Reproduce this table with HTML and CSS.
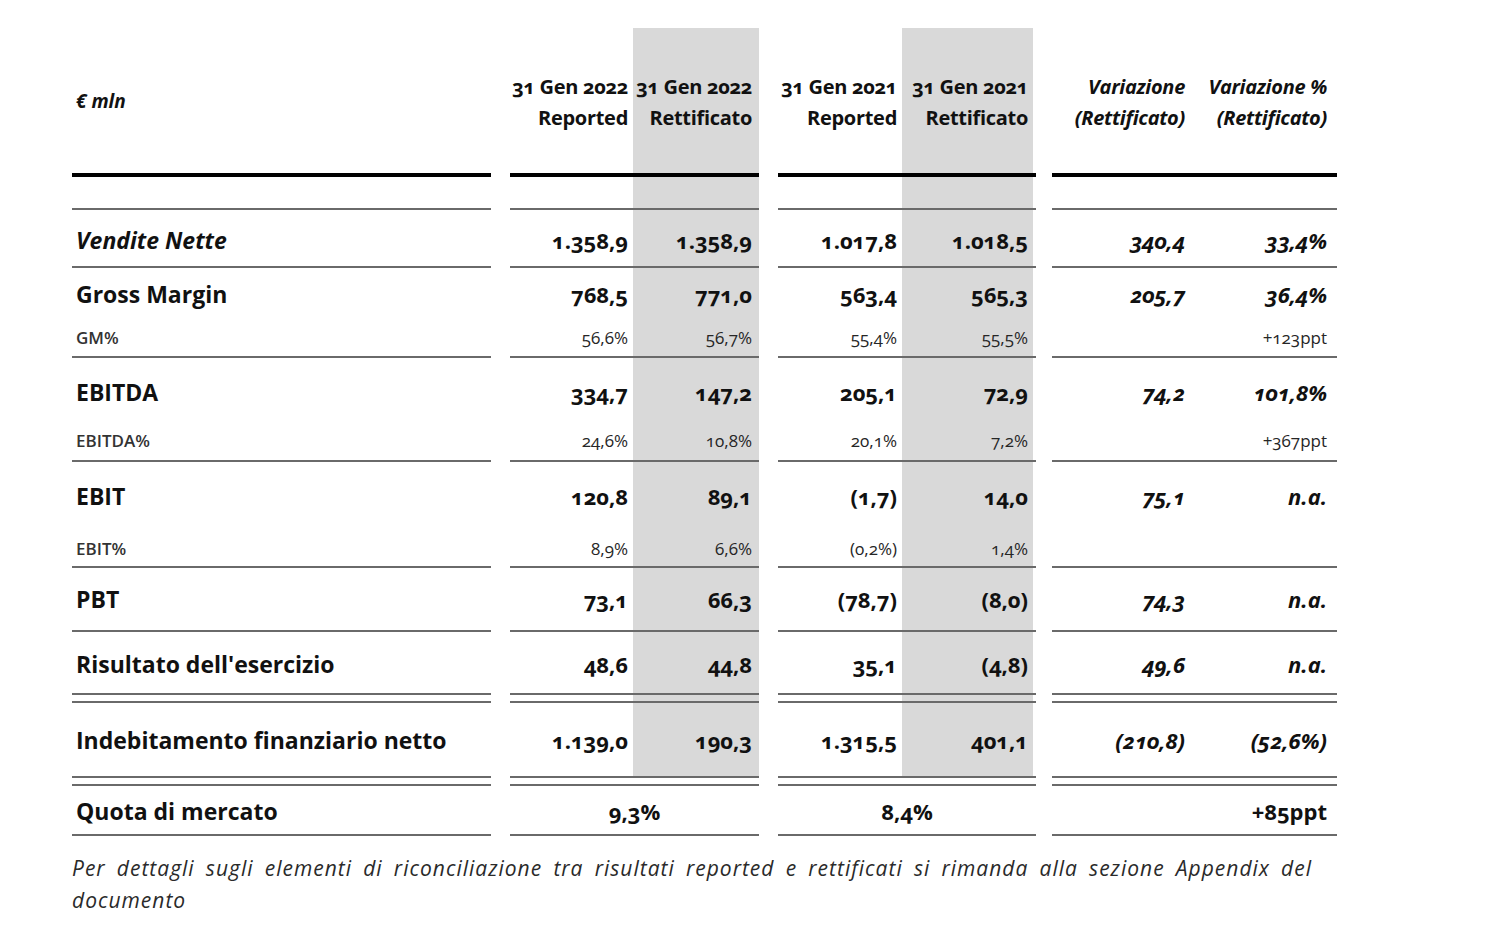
FILE: index.html
```html
<!DOCTYPE html>
<html lang="it">
<head>
<meta charset="utf-8">
<title>Risultati consolidati</title>
<link rel="stylesheet" href="styles.css">
</head>
<body>
<main class="report">
  <table class="fin">
    <colgroup>
      <col class="c-label"><col class="c-gap"><col class="c-rep1"><col class="c-ret1"><col class="c-gap"><col class="c-rep2"><col class="c-ret2"><col class="c-gap2"><col class="c-var"><col class="c-varp">
    </colgroup>
    <thead>
      <tr class="r-head">
        <th class="lbl unit">€ mln</th><th class="gap"></th>
        <th class="n1">31 Gen 2022<br>Reported</th>
        <th class="n2 shade">31 Gen 2022<br>Rettificato</th>
        <th class="gap"></th>
        <th class="n3">31 Gen 2021<br>Reported</th>
        <th class="n4 shade2">31 Gen 2021<br>Rettificato</th>
        <th class="gap"></th>
        <th class="n5 it">Variazione<br>(Rettificato)</th>
        <th class="n6 it">Variazione %<br>(Rettificato)</th>
      </tr>
    </thead>
    <tbody>
      <tr class="r-spacer line">
        <td></td><td class="gap"></td><td></td><td class="shade"></td><td class="gap"></td><td></td><td class="shade2"></td><td class="gap"></td><td></td><td></td>
      </tr>
      <tr class="r-vendite line">
        <td class="lbl it">Vendite Nette</td><td class="gap"></td>
        <td class="n1">1.358,9</td><td class="n2 shade">1.358,9</td><td class="gap"></td>
        <td class="n3">1.017,8</td><td class="n4 shade2">1.018,5</td><td class="gap"></td>
        <td class="n5 it">340,4</td><td class="n6 it">33,4%</td>
      </tr>
      <tr class="r-gm">
        <td class="lbl">Gross Margin</td><td class="gap"></td>
        <td class="n1">768,5</td><td class="n2 shade">771,0</td><td class="gap"></td>
        <td class="n3">563,4</td><td class="n4 shade2">565,3</td><td class="gap"></td>
        <td class="n5 it">205,7</td><td class="n6 it">36,4%</td>
      </tr>
      <tr class="r-gm-sub sub line">
        <td class="lbl">GM%</td><td class="gap"></td>
        <td class="n1">56,6%</td><td class="n2 shade">56,7%</td><td class="gap"></td>
        <td class="n3">55,4%</td><td class="n4 shade2">55,5%</td><td class="gap"></td>
        <td class="n5"></td><td class="n6">+123ppt</td>
      </tr>
      <tr class="r-ebitda">
        <td class="lbl">EBITDA</td><td class="gap"></td>
        <td class="n1">334,7</td><td class="n2 shade">147,2</td><td class="gap"></td>
        <td class="n3">205,1</td><td class="n4 shade2">72,9</td><td class="gap"></td>
        <td class="n5 it">74,2</td><td class="n6 it">101,8%</td>
      </tr>
      <tr class="r-ebitda-sub sub line">
        <td class="lbl">EBITDA%</td><td class="gap"></td>
        <td class="n1">24,6%</td><td class="n2 shade">10,8%</td><td class="gap"></td>
        <td class="n3">20,1%</td><td class="n4 shade2">7,2%</td><td class="gap"></td>
        <td class="n5"></td><td class="n6">+367ppt</td>
      </tr>
      <tr class="r-ebit">
        <td class="lbl">EBIT</td><td class="gap"></td>
        <td class="n1">120,8</td><td class="n2 shade">89,1</td><td class="gap"></td>
        <td class="n3">(1,7)</td><td class="n4 shade2">14,0</td><td class="gap"></td>
        <td class="n5 it">75,1</td><td class="n6 it">n.a.</td>
      </tr>
      <tr class="r-ebit-sub sub line">
        <td class="lbl">EBIT%</td><td class="gap"></td>
        <td class="n1">8,9%</td><td class="n2 shade">6,6%</td><td class="gap"></td>
        <td class="n3">(0,2%)</td><td class="n4 shade2">1,4%</td><td class="gap"></td>
        <td class="n5"></td><td class="n6"></td>
      </tr>
      <tr class="r-pbt line">
        <td class="lbl">PBT</td><td class="gap"></td>
        <td class="n1">73,1</td><td class="n2 shade">66,3</td><td class="gap"></td>
        <td class="n3">(78,7)</td><td class="n4 shade2">(8,0)</td><td class="gap"></td>
        <td class="n5 it">74,3</td><td class="n6 it">n.a.</td>
      </tr>
      <tr class="r-ris line">
        <td class="lbl">Risultato dell'esercizio</td><td class="gap"></td>
        <td class="n1">48,6</td><td class="n2 shade">44,8</td><td class="gap"></td>
        <td class="n3">35,1</td><td class="n4 shade2">(4,8)</td><td class="gap"></td>
        <td class="n5 it">49,6</td><td class="n6 it">n.a.</td>
      </tr>
      <tr class="r-rule line">
        <td></td><td class="gap"></td><td></td><td class="shade"></td><td class="gap"></td><td></td><td class="shade2"></td><td class="gap"></td><td></td><td></td>
      </tr>
      <tr class="r-debt line">
        <td class="lbl">Indebitamento finanziario netto</td><td class="gap"></td>
        <td class="n1">1.139,0</td><td class="n2 shade">190,3</td><td class="gap"></td>
        <td class="n3">1.315,5</td><td class="n4 shade2">401,1</td><td class="gap"></td>
        <td class="n5 it">(210,8)</td><td class="n6 it">(52,6%)</td>
      </tr>
      <tr class="r-rule line">
        <td></td><td class="gap"></td><td></td><td></td><td class="gap"></td><td></td><td></td><td class="gap"></td><td></td><td></td>
      </tr>
      <tr class="r-quota line">
        <td class="lbl">Quota di mercato</td><td class="gap"></td>
        <td class="mid" colspan="2">9,3%</td><td class="gap"></td>
        <td class="mid" colspan="2">8,4%</td><td class="gap"></td>
        <td class="n6" colspan="2">+85ppt</td>
      </tr>
    </tbody>
  </table>
  <p class="note">Per dettagli sugli elementi di riconciliazione tra risultati reported e rettificati si rimanda alla sezione Appendix del documento</p>
</main>
</body>
</html>
```

FILE: styles.css
```css
* { box-sizing: border-box; }

html, body {
  margin: 0;
  background: #ffffff;
}

body {
  font-family: "Open Sans", "Noto Sans", sans-serif;
  color: #111111;
  font-variant-numeric: oldstyle-nums;
}

.report {
  padding: 28px 0 0 72px;
}

.fin {
  border-collapse: separate;
  border-spacing: 0;
  table-layout: fixed;
  width: 1265px;
}

.c-label { width: 419px; }
.c-gap { width: 19px; }
.c-gap2 { width: 16px; }
.c-rep1 { width: 123px; }
.c-ret1 { width: 126px; }
.c-rep2 { width: 124px; }
.c-ret2 { width: 134px; }
.c-var { width: 138px; }
.c-varp { width: 147px; }

.fin th,
.fin td {
  padding: 0;
  vertical-align: middle;
  text-align: right;
  font-size: 22px;
  font-weight: 700;
  white-space: nowrap;
}

.fin .lbl {
  text-align: left;
  padding-left: 4px;
  font-size: 23px;
}

.fin .n1 { padding-right: 5px; }
.fin .n2 { padding-right: 7px; }
.fin .n3 { padding-right: 5px; }
.fin .n4 { padding-right: 8px; }
.fin .n5 { padding-right: 5px; }
.fin .n6 { padding-right: 10px; }
.fin .mid { text-align: center; }

.it { font-style: italic; }

.shade { background: #d9d9d9; }
.shade2 { background: linear-gradient(to right, #d9d9d9 131px, transparent 131px); }

/* header */
.r-head { height: 149px; }
.r-head th {
  font-size: 20px;
  line-height: 31px;
  padding-top: 2px;
  letter-spacing: -0.3px;
}
.r-head th:not(.gap) { border-bottom: 4px solid #000000; }
.r-head .unit {
  font-size: 19px;
  font-style: italic;
  letter-spacing: 0;
}

/* rules */
.line > td:not(.gap) { border-bottom: 2px solid #6a6a6a; }

/* row heights */
.r-spacer { height: 33px; }
.r-vendite { height: 58px; }
.r-gm { height: 54px; }
.r-gm-sub { height: 36px; }
.r-ebitda { height: 66px; }
.r-ebitda-sub { height: 38px; }
.r-ebit { height: 68px; }
.r-ebit-sub { height: 38px; }
.r-pbt { height: 64px; }
.r-ris { height: 63px; }
.r-rule { height: 8px; }
.r-debt { height: 75px; }
.r-quota { height: 50px; }

.r-vendite td, .r-ris td { padding-top: 3px; }
.r-gm td { padding-bottom: 3px; }
.r-gm-sub td, .r-ebitda-sub td { padding-bottom: 3px; }
.r-ebitda td { padding-top: 1px; }
.r-quota td { padding-top: 1px; }
.r-debt td { padding-top: 0; }

/* sub rows */
.sub td,
.fin .sub .lbl {
  font-size: 17px;
  font-weight: 500;
  color: #262626;
}
.fin .sub .lbl { font-weight: 600; color: #333333; }

.note {
  width: 1240px;
  margin: 16px 0 0;
  font-size: 21px;
  line-height: 32px;
  font-style: italic;
  letter-spacing: 1px;
  word-spacing: 0;
  text-align: justify;
  color: #2a2a2a;
}
```
